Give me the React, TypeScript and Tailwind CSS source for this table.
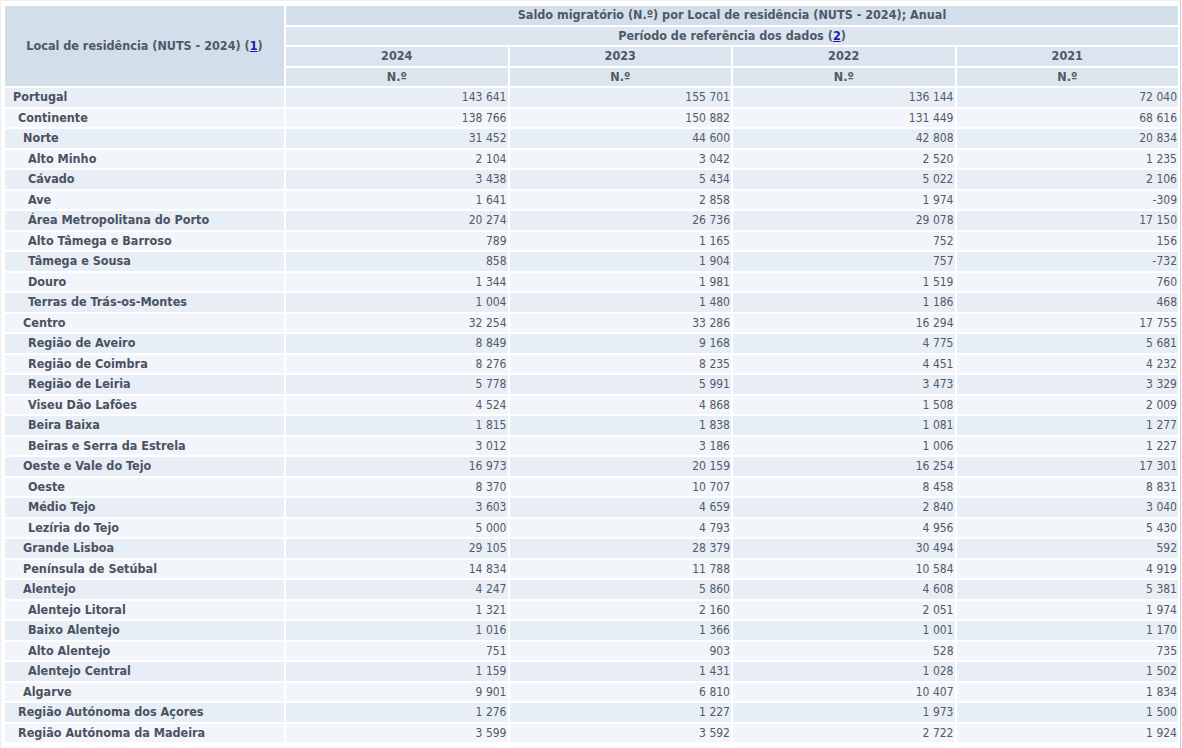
import React from "react";

type Row = { name: string; level: number; v: string[] };

const rows: Row[] = [
  { name: "Portugal", level: 0, v: ["143 641", "155 701", "136 144", "72 040"] },
  { name: "Continente", level: 1, v: ["138 766", "150 882", "131 449", "68 616"] },
  { name: "Norte", level: 2, v: ["31 452", "44 600", "42 808", "20 834"] },
  { name: "Alto Minho", level: 3, v: ["2 104", "3 042", "2 520", "1 235"] },
  { name: "Cávado", level: 3, v: ["3 438", "5 434", "5 022", "2 106"] },
  { name: "Ave", level: 3, v: ["1 641", "2 858", "1 974", "-309"] },
  { name: "Área Metropolitana do Porto", level: 3, v: ["20 274", "26 736", "29 078", "17 150"] },
  { name: "Alto Tâmega e Barroso", level: 3, v: ["789", "1 165", "752", "156"] },
  { name: "Tâmega e Sousa", level: 3, v: ["858", "1 904", "757", "-732"] },
  { name: "Douro", level: 3, v: ["1 344", "1 981", "1 519", "760"] },
  { name: "Terras de Trás-os-Montes", level: 3, v: ["1 004", "1 480", "1 186", "468"] },
  { name: "Centro", level: 2, v: ["32 254", "33 286", "16 294", "17 755"] },
  { name: "Região de Aveiro", level: 3, v: ["8 849", "9 168", "4 775", "5 681"] },
  { name: "Região de Coimbra", level: 3, v: ["8 276", "8 235", "4 451", "4 232"] },
  { name: "Região de Leiria", level: 3, v: ["5 778", "5 991", "3 473", "3 329"] },
  { name: "Viseu Dão Lafões", level: 3, v: ["4 524", "4 868", "1 508", "2 009"] },
  { name: "Beira Baixa", level: 3, v: ["1 815", "1 838", "1 081", "1 277"] },
  { name: "Beiras e Serra da Estrela", level: 3, v: ["3 012", "3 186", "1 006", "1 227"] },
  { name: "Oeste e Vale do Tejo", level: 2, v: ["16 973", "20 159", "16 254", "17 301"] },
  { name: "Oeste", level: 3, v: ["8 370", "10 707", "8 458", "8 831"] },
  { name: "Médio Tejo", level: 3, v: ["3 603", "4 659", "2 840", "3 040"] },
  { name: "Lezíria do Tejo", level: 3, v: ["5 000", "4 793", "4 956", "5 430"] },
  { name: "Grande Lisboa", level: 2, v: ["29 105", "28 379", "30 494", "592"] },
  { name: "Península de Setúbal", level: 2, v: ["14 834", "11 788", "10 584", "4 919"] },
  { name: "Alentejo", level: 2, v: ["4 247", "5 860", "4 608", "5 381"] },
  { name: "Alentejo Litoral", level: 3, v: ["1 321", "2 160", "2 051", "1 974"] },
  { name: "Baixo Alentejo", level: 3, v: ["1 016", "1 366", "1 001", "1 170"] },
  { name: "Alto Alentejo", level: 3, v: ["751", "903", "528", "735"] },
  { name: "Alentejo Central", level: 3, v: ["1 159", "1 431", "1 028", "1 502"] },
  { name: "Algarve", level: 2, v: ["9 901", "6 810", "10 407", "1 834"] },
  { name: "Região Autónoma dos Açores", level: 1, v: ["1 276", "1 227", "1 973", "1 500"] },
  { name: "Região Autónoma da Madeira", level: 1, v: ["3 599", "3 592", "2 722", "1 924"] },
];

const years = ["2024", "2023", "2022", "2021"];

const indent: Record<number, string> = {
  0: "pl-[8px]",
  1: "pl-[13px]",
  2: "pl-[18px]",
  3: "pl-[23px]",
};

export default function App() {
  return (
    <div
      className="w-[1181px] min-h-[748px] border-l border-t border-r border-l-[#eeeeee] border-t-[#eeeeee] border-r-[#c8c8c8] bg-white pl-[2px] pt-[3px] text-[12px] leading-[14px]"
      style={{ fontFamily: '"DejaVu Sans Condensed", "DejaVu Sans", sans-serif', fontStretch: "condensed" }}
    >
      <table className="w-[1177px] table-fixed border-separate border-spacing-[2px]">
        <colgroup>
          <col className="w-[279px]" />
          <col />
          <col />
          <col />
          <col />
        </colgroup>
        <thead className="text-[12.5px] font-bold text-[#4f5866]">
          <tr>
            <th rowSpan={4} className="bg-[#d3deeb] text-center align-middle">
              Local de residência (NUTS - 2024) (
              <a className="text-[#1c1ca8] underline">1</a>)
            </th>
            <th colSpan={4} className="h-[18.5px] bg-[#d4dfec] text-center">
              Saldo migratório (N.º) por Local de residência (NUTS - 2024); Anual
            </th>
          </tr>
          <tr>
            <th colSpan={4} className="h-[18.5px] bg-[#dde6f0] text-center">
              Período de referência dos dados (<a className="text-[#1c1ca8] underline">2</a>)
            </th>
          </tr>
          <tr>
            {years.map((y) => (
              <th key={y} className="h-[18.5px] bg-[#dbe4ef] text-center">
                {y}
              </th>
            ))}
          </tr>
          <tr>
            {years.map((y) => (
              <th key={y} className="h-[18.5px] bg-[#dde5ef] text-center">
                N.º
              </th>
            ))}
          </tr>
        </thead>
        <tbody>
          {rows.map((r, i) => {
            const bg = i % 2 === 0 ? "bg-[#e8eef6]" : "bg-[#f2f5f9]";
            return (
              <tr key={r.name}>
                <td className={`h-[18.5px] whitespace-nowrap text-[12.5px] font-bold text-[#4a5260] ${bg} ${indent[r.level]}`}>
                  {r.name}
                </td>
                {r.v.map((n, j) => (
                  <td key={j} className={`h-[18.5px] pr-[1px] text-right text-[#535a66] ${bg}`}>
                    {n}
                  </td>
                ))}
              </tr>
            );
          })}
        </tbody>
      </table>
    </div>
  );
}
